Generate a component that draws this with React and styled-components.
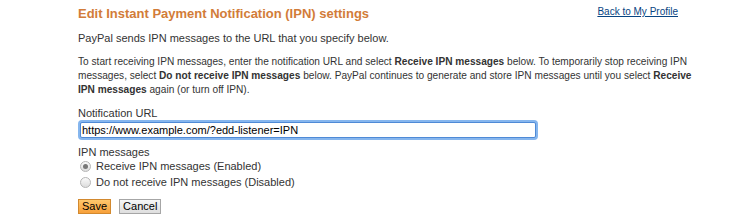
import React from "react";
import styled, { createGlobalStyle } from "styled-components";

const Global = createGlobalStyle`
  body {
    margin: 0;
    background: #fff;
    font-family: "Liberation Sans", Arial, sans-serif;
    font-size: 11px;
    color: #333;
  }
`;

const Page = styled.div`
  width: 600px;
  padding: 6px 0 0 78px;
`;

const Header = styled.div`
  display: flex;
  justify-content: space-between;
  align-items: flex-start;
`;

const Title = styled.h2`
  margin: 0;
  font-size: 13px;
  font-weight: bold;
  color: #d27c39;
  line-height: 16px;
`;

const BackLink = styled.a`
  font-size: 10px;
  color: #084482;
  text-decoration: underline;
  cursor: pointer;
`;

const Text = styled.p`
  margin: ${(p) => p.$mt || 0}px 0 0;
  line-height: 14px;
  white-space: nowrap;
  font-size: ${(p) => (p.$small ? "10.15px" : "11px")};
`;

const Label = styled.div`
  margin-top: ${(p) => p.$mt || 0}px;
  line-height: ${(p) => p.$lh || 14}px;
`;

const UrlInput = styled.input`
  display: block;
  box-sizing: border-box;
  width: 456px;
  height: 16px;
  margin: 2px 0 0 2px;
  padding: 0 1px;
  font: 11px "Liberation Sans", Arial, sans-serif;
  color: #000;
  border: 1px solid #4f8ad6;
  border-radius: 2px;
  box-shadow: 0 0 0 2px #86b6ee;
  outline: none;
`;

const RadioRow = styled.label`
  display: flex;
  align-items: center;
  height: 16px;
  padding-left: 2px;
  color: #333;
`;

const Radio = styled.span`
  width: 9px;
  height: 9px;
  margin-right: 5px;
  border-radius: 50%;
  border: 1px solid #b5b5b5;
  background: linear-gradient(#fafafa, #dcdcdc);
  display: flex;
  align-items: center;
  justify-content: center;
  &::after {
    content: "";
    width: 5px;
    height: 5px;
    border-radius: 50%;
    background: ${(p) => (p.$checked ? "#777" : "transparent")};
  }
`;

const Buttons = styled.div`
  display: flex;
  gap: 8px;
  margin-top: 9px;
`;

const Button = styled.button`
  height: 15px;
  padding: 0 3px;
  font: 11px "Liberation Sans", Arial, sans-serif;
  color: #000;
  line-height: 13px;
  border-radius: 0;
  border: 1px solid ${(p) => (p.$primary ? "#d2892f" : "#a6a6a6")};
  background: ${(p) =>
    p.$primary
      ? "linear-gradient(#ffc86d, #f7a03a)"
      : "linear-gradient(#f7f7f7, #dedede)"};
  cursor: pointer;
`;

export default function App() {
  return (
    <>
      <Global />
      <Page>
        <Header>
          <Title>Edit Instant Payment Notification (IPN) settings</Title>
          <BackLink>Back to My Profile</BackLink>
        </Header>
        <Text $mt={9}>PayPal sends IPN messages to the URL that you specify below.</Text>
        <Text $mt={10} $small>
          To start receiving IPN messages, enter the notification URL and select{" "}
          <b>Receive IPN messages</b> below. To temporarily stop receiving IPN
          <br />
          messages, select <b>Do not receive IPN messages</b> below. PayPal
          continues to generate and store IPN messages until you select{" "}
          <b>Receive</b>
          <br />
          <b>IPN messages</b> again (or turn off IPN).
        </Text>
        <Label $mt={9}>Notification URL</Label>
        <UrlInput defaultValue="https://www.example.com/?edd-listener=IPN" />
        <Label $mt={8} $lh={12}>IPN messages</Label>
        <RadioRow>
          <Radio $checked />
          Receive IPN messages (Enabled)
        </RadioRow>
        <RadioRow>
          <Radio />
          Do not receive IPN messages (Disabled)
        </RadioRow>
        <Buttons>
          <Button $primary>Save</Button>
          <Button>Cancel</Button>
        </Buttons>
      </Page>
    </>
  );
}
